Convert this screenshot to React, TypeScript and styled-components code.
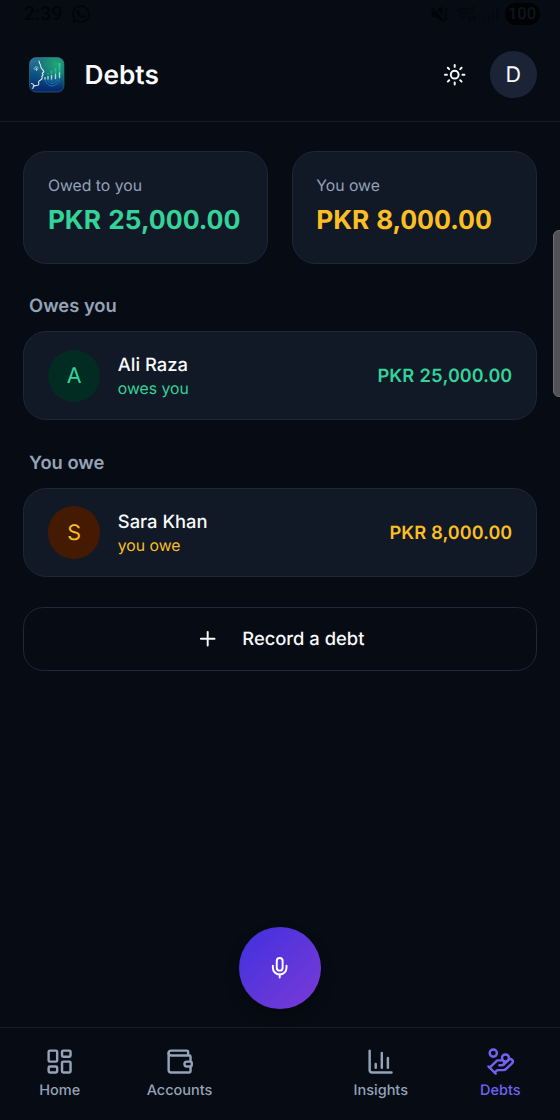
import React from "react";
import styled, { createGlobalStyle } from "styled-components";
import { ChartColumn, HandCoins, LayoutDashboard, Mic, Plus, Sun, Wallet } from "lucide-react";
import { FaWhatsapp } from "react-icons/fa";

const color = {
  bg: "#070b14",
  card: "#111826",
  line: "#1f2739",
  text: "#f8fafc",
  muted: "#94a3b8",
  green: "#34d399",
  amber: "#fbbf24",
  accent: "#6f63f0",
  status: "#020408",
};

const GlobalStyle = createGlobalStyle`
  * { box-sizing: border-box; }
  body { margin: 0; background: ${color.bg}; }
`;

const Screen = styled.div`
  position: relative;
  display: flex;
  flex-direction: column;
  width: 560px;
  height: 1120px;
  overflow: hidden;
  background: ${color.bg};
  color: ${color.text};
  font-family: Inter, sans-serif;
  text-rendering: geometricPrecision;
`;

const StatusBar = styled.div`
  display: flex;
  align-items: center;
  justify-content: space-between;
  height: 27px;
  padding: 0 20.5px 0 24px;
  color: ${color.status};
  font: 500 19.5px/26px Roboto, sans-serif;
`;

const StatusGroup = styled.div<{ $gap: number }>`
  display: flex;
  align-items: center;
  gap: ${(p) => p.$gap}px;
`;

const Battery = styled.span`
  width: 35px;
  height: 22px;
  margin-left: -1px;
  border-radius: 11px;
  background: #010204;
  color: #10141d;
  font: 500 16.5px/23px Roboto, sans-serif;
  text-align: center;
`;

const Header = styled.header`
  display: flex;
  align-items: center;
  height: 95px;
  padding: 1px 23.3px 0 29px;
  border-bottom: 1px solid #171c2b;
`;

const Title = styled.h1`
  flex: 1;
  margin: 0 0 0 19.5px;
  padding-top: 2.4px;
  font-size: 26.25px;
  line-height: 34px;
  font-weight: 600;
`;

const Profile = styled.div`
  display: grid;
  place-items: center;
  width: 46.7px;
  height: 46.7px;
  margin-left: 23.3px;
  border-radius: 50%;
  background: #1b2437;
  font-size: 21.5px;
`;

const Main = styled.main`
  flex: 1;
  display: flex;
  flex-direction: column;
  padding: 29px 23.3px 0;
`;

const Totals = styled.div`
  display: grid;
  grid-template-columns: 1fr 1fr;
  gap: 23.3px;
`;

const Card = styled.div`
  border: 1px solid ${color.line};
  border-radius: 23.3px;
  background: ${color.card};
`;

const TotalCard = styled(Card)`
  height: 112.7px;
  padding: 23.9px 23.6px;
`;

const TotalLabel = styled.div`
  color: ${color.muted};
  font-size: 15.75px;
  line-height: 20px;
`;

const TotalValue = styled.div<{ $tone: string }>`
  margin-top: 8.2px;
  color: ${(p) => p.$tone};
  font-size: 26.25px;
  line-height: 34px;
  font-weight: 700;
  letter-spacing: -0.04px;
  font-variant-numeric: tabular-nums;
  white-space: nowrap;
`;

const SectionTitle = styled.h2`
  margin: 30.15px 0 13px 5.8px;
  color: ${color.muted};
  font-size: 18.375px;
  line-height: 24px;
  font-weight: 600;
`;

const DebtRow = styled(Card)`
  display: flex;
  align-items: center;
  height: 89.6px;
  padding: 0.3px 23.5px 0;
`;

const Avatar = styled.div<{ $tone: string; $fill: string }>`
  display: grid;
  place-items: center;
  width: 52.5px;
  height: 52.5px;
  margin-right: 17.5px;
  border-radius: 50%;
  background: ${(p) => p.$fill};
  color: ${(p) => p.$tone};
  font-size: 21.5px;
`;

const Person = styled.div`
  flex: 1;
`;

const Name = styled.div`
  font-size: 18.375px;
  line-height: 26px;
  font-weight: 500;
`;

const Relation = styled.div<{ $tone: string }>`
  color: ${(p) => p.$tone};
  font-size: 15.75px;
  line-height: 21px;
`;

const Amount = styled.div<{ $tone: string }>`
  color: ${(p) => p.$tone};
  font-size: 18.375px;
  font-weight: 600;
  font-variant-numeric: tabular-nums;
`;

const RecordButton = styled.button`
  display: flex;
  align-items: center;
  justify-content: center;
  gap: 23.3px;
  height: 64px;
  margin-top: 29.7px;
  border: 1px solid #22283b;
  border-radius: 20.4px;
  background: transparent;
  color: ${color.text};
  font: 500 18.375px Inter, sans-serif;
  text-rendering: inherit;
`;

const Nav = styled.nav`
  display: grid;
  grid-template-columns: 119.5px 120px 81.5px 119.5px 119.5px;
  height: 93px;
  padding-top: 18.8px;
  border-top: 1px solid #171c2b;
`;

const NavItem = styled.div<{ $active?: boolean }>`
  display: flex;
  flex-direction: column;
  align-items: center;
  gap: 4.6px;
  color: ${(p) => (p.$active ? color.accent : color.muted)};
  font-size: 14.5px;
  line-height: 20px;
  font-weight: 500;
`;

const VoiceButton = styled.button`
  position: absolute;
  left: 239.2px;
  top: 927.2px;
  display: grid;
  place-items: center;
  width: 81.7px;
  height: 81.7px;
  padding: 0;
  border: 0;
  border-radius: 50%;
  background: linear-gradient(135deg, #4030df, #7a3bd6);
  box-shadow: 0 6px 14px rgba(0, 0, 0, 0.3);
  color: #fff;
`;

const ScrollThumb = styled.div`
  position: absolute;
  right: -6px;
  top: 230px;
  width: 13px;
  height: 167px;
  border: 1.5px solid #6d6f74;
  border-radius: 6px;
  background: #505257;
`;

const Logo = () => (
  <svg width="36" height="36" viewBox="0 0 36 36" fill="none">
    <defs>
      <linearGradient id="logoBase" x1="0" y1="0" x2="0" y2="36" gradientUnits="userSpaceOnUse">
        <stop stopColor="#337f9e" />
        <stop offset=".5" stopColor="#0c4f83" />
        <stop offset="1" stopColor="#06216c" />
      </linearGradient>
      <radialGradient id="logoGlow" cx="27" cy="7" r="25" gradientUnits="userSpaceOnUse">
        <stop stopColor="#22a774" />
        <stop offset=".5" stopColor="#168573" stopOpacity=".8" />
        <stop offset="1" stopColor="#0c4f83" stopOpacity="0" />
      </radialGradient>
      <linearGradient id="logoBars" x1="0" y1="5" x2="0" y2="20" gradientUnits="userSpaceOnUse">
        <stop stopColor="#31d979" />
        <stop offset="1" stopColor="#1a9b9b" />
      </linearGradient>
    </defs>
    <rect x=".5" y=".5" width="34.5" height="34.5" rx="6.5" fill="url(#logoBase)" />
    <rect x=".5" y=".5" width="34.5" height="34.5" rx="6.5" fill="url(#logoGlow)" stroke="#32758c" strokeOpacity=".6" />
    <path d="M19 17v-1M22.5 17v-3.5M26.5 17v-6M30.5 17V6" stroke="url(#logoBars)" strokeWidth="2" />
    <path d="M16 22c1 5 4 7 7 7s7-3 8-8M18.5 22c1 3 2.5 4.5 4.5 4.5s4.5-2 5.5-5M21 22c.5 1.5 1 2 2 2s2-.7 2.8-2.5" stroke="#1a70bd" strokeWidth="1" />
    <path d="M16 20.5v1.5M19 19.5v2.5M22.5 18.5v3.5M26.5 17.5v4M30.5 16v4.5" stroke="#a7d6df" strokeWidth="1.4" strokeLinecap="round" />
    <path d="M10 4c.3 3 2 3.5 1.8 5.5-.2 1.5 2.5 3.5 3 5 .2 1-1.2 1.2-1.5 1.8l.8 1.7-1.2 1.2.3 2c-.3 1.8-2.4 2-3.5 3.3-.6.9.7 2-.1 3.2-1 1.4-3.4.3-4.6 1.3-.8.6-1 1.5-1.2 2.5M2.5 26.5c1.3.2 2 1 2.5 2.2" stroke="#e4eae8" strokeWidth="1.1" strokeLinecap="round" />
    <path d="M5 11.5C6 9.5 8 9.5 9.2 10.7M5.8 12.5c1.3-.7 2-.7 3 0M7.5 11.5v2" stroke="#a9ced5" strokeWidth="1" strokeLinecap="round" />
  </svg>
);

const MutedIcon = () => (
  <svg width="18" height="18" viewBox="0 0 18 18" fill="none" stroke="currentColor">
    <path d="M1 6.5h3.5L11 2v14l-6.5-4.5H1z" fill="currentColor" />
    <path d="M1 1l14 15" stroke={color.bg} strokeWidth="2" />
    <path d="M1 3l12 13" strokeWidth="1.2" />
    <path d="M14 3l2 2-2 2 2 2-2 2 2 2-2 2" strokeWidth="1.3" />
  </svg>
);

const WifiIcon = () => (
  <svg width="20" height="18" viewBox="0 0 20 18" fill="none" stroke="#04070d" strokeWidth="1.7">
    <path d="M1 6.5C5 3 11 3 14 5M3.5 9.5c3.5-3 7-2.5 9.5-.5M6 12.5c2-1.5 3.5-1.5 5 0M8.5 15h.1" />
    <path d="M18.5 2h-3v2.5c3-1 3.7 3 .3 3M14 11v5m-1.5-1.5L14 16l1.5-1.5M18 16v-5m-1.5 1.5L18 11l1.5 1.5" strokeWidth="1.1" />
  </svg>
);

const SignalIcon = () => (
  <svg width="16" height="16" viewBox="0 0 16 16" stroke="#050810" strokeWidth="2">
    <path d="M2 15v-3M6 15V9M10 15V5M14 15V1" />
  </svg>
);

type DebtProps = { heading: string; name: string; relation: string; amount: string; tone: string; fill: string };

const Debt = ({ heading, name, relation, amount, tone, fill }: DebtProps) => (
  <>
    <SectionTitle>{heading}</SectionTitle>
    <DebtRow>
      <Avatar $tone={tone} $fill={fill}>{name[0]}</Avatar>
      <Person>
        <Name>{name}</Name>
        <Relation $tone={tone}>{relation}</Relation>
      </Person>
      <Amount $tone={tone}>{amount}</Amount>
    </DebtRow>
  </>
);

export default function App() {
  return (
    <Screen>
      <GlobalStyle />
      <StatusBar>
        <StatusGroup $gap={9}>
          <span>2:39</span>
          <FaWhatsapp size={20} />
        </StatusGroup>
        <StatusGroup $gap={7}>
          <MutedIcon />
          <WifiIcon />
          <SignalIcon />
          <Battery>100</Battery>
        </StatusGroup>
      </StatusBar>
      <Header>
        <Logo />
        <Title>Debts</Title>
        <Sun size={23.4} />
        <Profile>D</Profile>
      </Header>
      <Main>
        <Totals>
          <TotalCard>
            <TotalLabel>Owed to you</TotalLabel>
            <TotalValue $tone={color.green}>PKR 25,000.00</TotalValue>
          </TotalCard>
          <TotalCard>
            <TotalLabel>You owe</TotalLabel>
            <TotalValue $tone={color.amber}>PKR 8,000.00</TotalValue>
          </TotalCard>
        </Totals>
        <Debt heading="Owes you" name="Ali Raza" relation="owes you" amount="PKR 25,000.00" tone={color.green} fill="#022c22" />
        <Debt heading="You owe" name="Sara Khan" relation="you owe" amount="PKR 8,000.00" tone={color.amber} fill="#451a03" />
        <RecordButton>
          <Plus size={23.4} />
          Record a debt
        </RecordButton>
      </Main>
      <Nav>
        <NavItem><LayoutDashboard size={29.2} />Home</NavItem>
        <NavItem><Wallet size={29.2} />Accounts</NavItem>
        <span />
        <NavItem><ChartColumn size={29.2} />Insights</NavItem>
        <NavItem $active><HandCoins size={29.2} />Debts</NavItem>
      </Nav>
      <VoiceButton><Mic size={23.4} /></VoiceButton>
      <ScrollThumb />
    </Screen>
  );
}
